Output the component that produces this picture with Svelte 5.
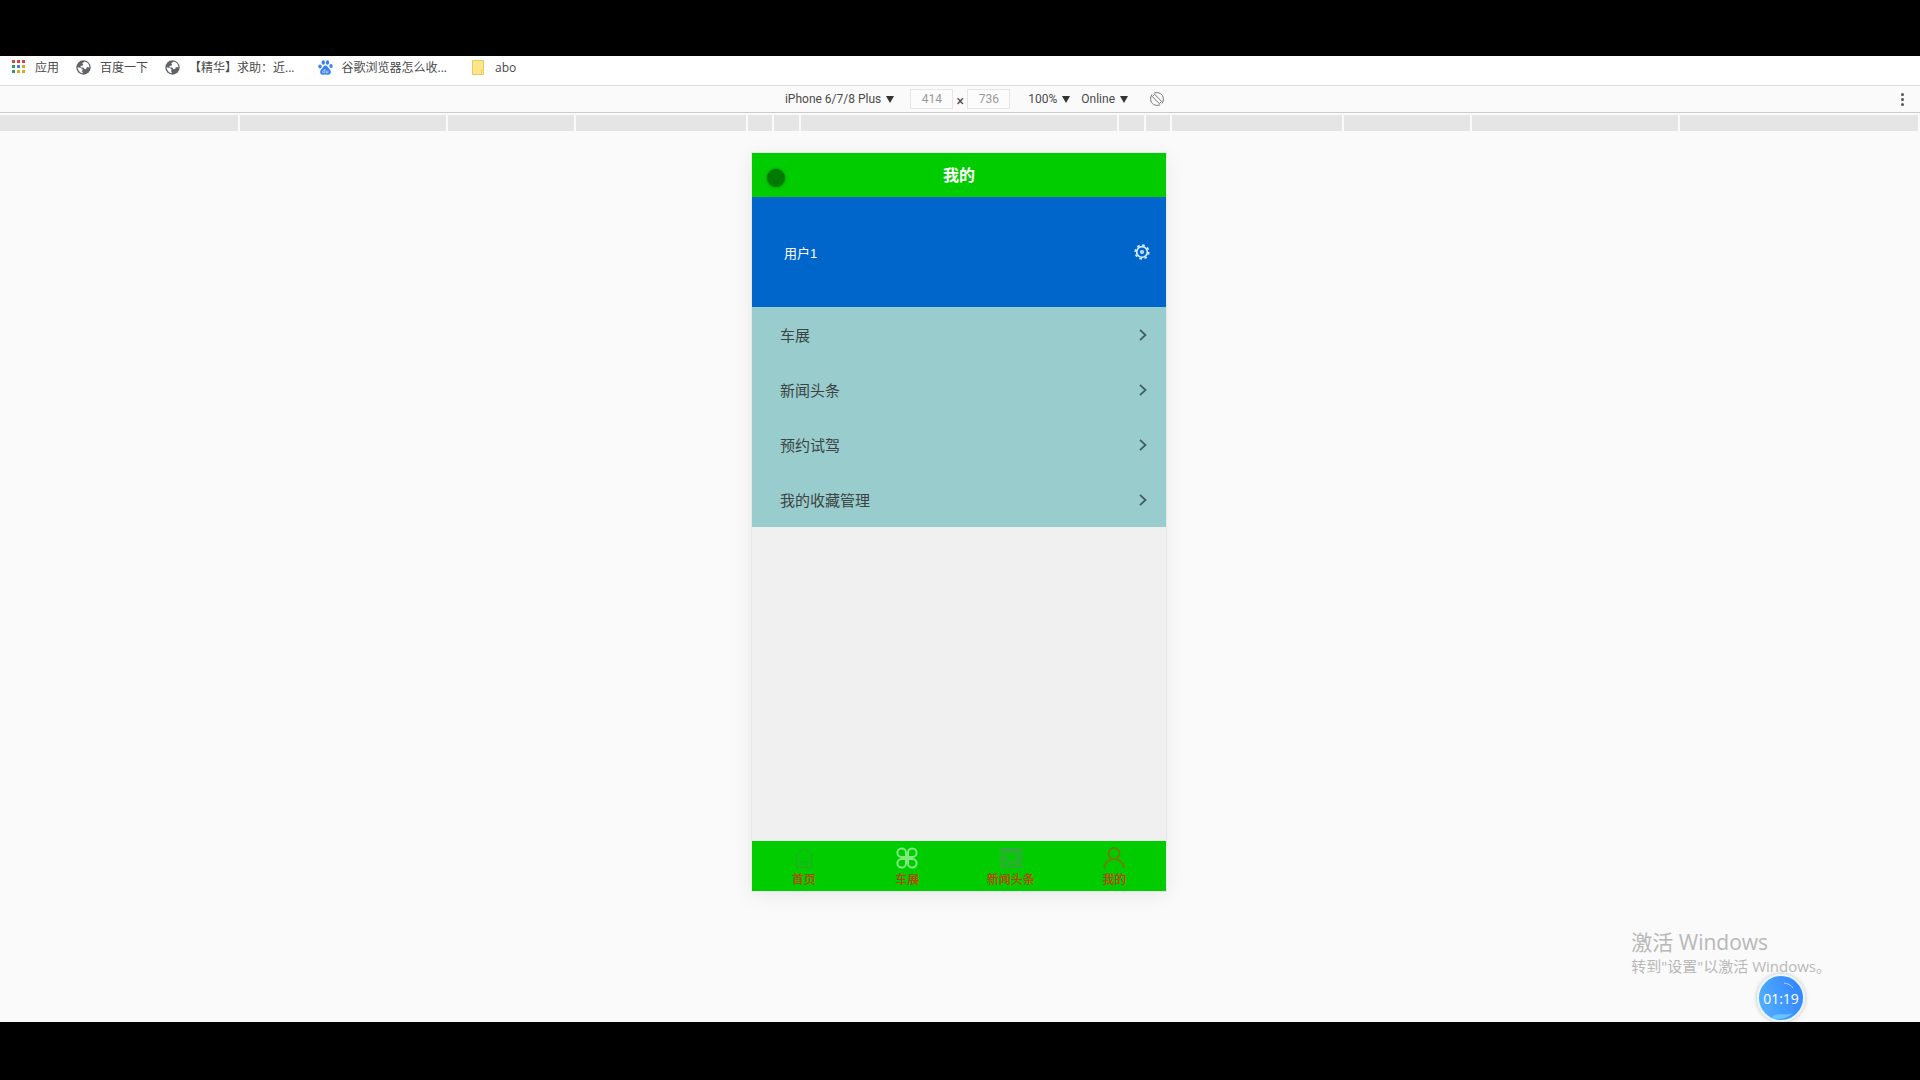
<script>
    const bookmarks = [
        { icon: "apps", label: "应用" },
        { icon: "globe", label: "百度一下" },
        { icon: "globe", label: "【精华】求助：近..." },
        { icon: "paw", label: "谷歌浏览器怎么收..." },
        { icon: "folder", label: "abo" },
    ];

    const appColors = ["#d9453d", "#d9453d", "#d9453d", "#2f9a58", "#3f7fe8", "#e0a526", "#2f9a58", "#e0a526", "#e0a526"];

    // widths between the preset device sizes, outer ones stretch
    const presets = [208, 128, 172, 26, 27, 318, 27, 26, 172, 128, 208];

    const rows = ["车展", "新闻头条", "预约试驾", "我的收藏管理"];

    const tabs = [
        { icon: "home", label: "首页" },
        { icon: "clover", label: "车展" },
        { icon: "news", label: "新闻头条" },
        { icon: "user", label: "我的" },
    ];

    let width = 414;
    let height = 736;
</script>

<div class="screen">
    <nav class="bookmarks">
        {#each bookmarks as { icon, label }}
            <a href="#top" class={icon}>
                {#if icon === "apps"}
                    <svg width="14" height="14" viewBox="0 0 14 14">
                        {#each appColors as fill, i}
                            <rect x={(i % 3) * 5} y={Math.floor(i / 3) * 5} width="3" height="3" {fill} />
                        {/each}
                    </svg>
                {:else if icon === "globe"}
                    <svg width="15" height="15" viewBox="0 0 15 15">
                        <circle cx="7.5" cy="7.5" r="7.2" fill="#5f6368" />
                        <path d="M8.500 1.600 6.200 3.400l1 1.200-.8 1.200-2 .3.400 1.300 2.400.2 1.500 1.700 1.600-.5.600-1.700 2.500.4A6 6 0 0 0 8.500 1.600ZM1.600 7.200l3.200.8 2 1.600-.8 1.300 1 2.400A6 6 0 0 1 1.600 7.200Z" fill="#fff" />
                    </svg>
                {:else if icon === "paw"}
                    <svg width="15" height="15" viewBox="0 0 15 15" fill="#3b82f0">
                        <ellipse cx="2" cy="6.5" rx="1.7" ry="2.1" />
                        <ellipse cx="5.3" cy="2.5" rx="1.7" ry="2.3" />
                        <ellipse cx="9.5" cy="2.5" rx="1.7" ry="2.3" />
                        <ellipse cx="13" cy="6" rx="1.7" ry="2.1" />
                        <path d="M7.500 5.500c2 0 2.500 2.200 4 3.600 2.300 2.200 1.500 5.700-1 5.700-1.300 0-1.700-.3-3-.3s-1.700.3-3 .3c-2.500 0-3.300-3.500-1-5.700C5 7.700 5.500 5.500 7.500 5.500Z" />
                        <path d="M6.700 9v3.700H5.400a1 1 0 0 1 0-2h1.300M8.300 10.500v2.200h1.700v-2.200" fill="none" stroke="#cfe2ff" stroke-width=".7" />
                    </svg>
                {:else}
                    <svg width="12" height="15" viewBox="0 0 12 15">
                        <path d="M.5.500h11v14H.5z" fill="#fde58a" stroke="#e8c95c" />
                        <path d="M9.500 14.500v-4h2" fill="#fff3bd" stroke="#e8c95c" />
                    </svg>
                {/if}
                <span>{label}</span>
            </a>
        {/each}
    </nav>

    <div class="toolbar">
        <div class="controls">
            <button class="drop device">iPhone 6/7/8 Plus <i></i></button>
            <input aria-label="Width" bind:value={width} />
            <span class="times">×</span>
            <input aria-label="Height" bind:value={height} />
            <button class="drop zoom">100% <i></i></button>
            <button class="drop">Online <i></i></button>
            <button class="rotate" aria-label="Rotate">
                <svg width="14" height="14" viewBox="0 0 14 14" fill="none" stroke="#777">
                    <path d="M4.600 2.300 11.700 9.400 9.400 11.700 2.300 4.600Z" />
                    <path d="M6 .7A6.300 6.300 0 0 1 13.300 8M8 13.300A6.300 6.300 0 0 1 .7 6M2 2.500A6.300 6.300 0 0 0 .7 6M12 11.500A6.300 6.300 0 0 0 13.300 8M6 .7 3.800 1.200M8 13.300l2.200-.5" />
                </svg>
            </button>
        </div>
        <button class="more" aria-label="More options"><i></i><i></i><i></i></button>
    </div>

    <div class="ruler">
        <span class="outer"></span>
        {#each presets as w}
            <span style="width: {w}px"></span>
        {/each}
        <span class="outer"></span>
    </div>

    <main>
        <div class="phone">
            <header>
                <h1>我的</h1>
                <div class="touch"></div>
            </header>

            <section class="profile">
                <span>用户1</span>
                <button aria-label="设置">
                    <svg width="16" height="16" viewBox="0 0 16 16" fill="none" stroke="#d9ecff">
                        <circle cx="8" cy="8" r="5.3" stroke-width="1.7" />
                        <circle cx="8" cy="8" r="6.8" stroke-width="1.7" stroke-dasharray="2.7 2.64" />
                        <circle cx="8" cy="8" r="1.3" stroke-width="1.4" />
                    </svg>
                </button>
            </section>

            <ul>
                {#each rows as row}
                    <li>
                        <a href="#top">
                            {row}
                            <svg width="8" height="12" viewBox="0 0 8 12" fill="none" stroke="#3f5f60" stroke-width="1.8">
                                <path d="m1 .8 5.500 5.200L1 11.200" />
                            </svg>
                        </a>
                    </li>
                {/each}
            </ul>

            <nav class="tabs">
                {#each tabs as { icon, label }}
                    <a href="#top">
                        <svg class={icon} width="22" height="22" viewBox="0 0 22 22" fill="none">
                            {#if icon === "home"}
                                <path d="M1.500 9.500 11 1.500l9.500 8M3.500 8.500v12h15v-12M8.500 20v-5h5v5" />
                            {:else if icon === "clover"}
                                <path d="M10 10H5.500A4.300 4.300 0 1 1 10 5.500ZM12 10V5.500A4.300 4.300 0 1 1 16.500 10ZM10 12v4.500A4.300 4.300 0 1 1 5.500 12ZM12 12h4.500a4.300 4.300 0 1 1-4.500 4.500Z" />
                            {:else if icon === "news"}
                                <path d="M1.500 2.500h19v17h-19zM4 5h14M5 8.500v3l3 3.500h9v-6.500" />
                            {:else}
                                <circle cx="11" cy="6.5" r="5.5" />
                                <path d="M1 21c.8-5.500 5-9 10-9s9.200 3.500 10 9" />
                            {/if}
                        </svg>
                        <span>{label}</span>
                    </a>
                {/each}
            </nav>
        </div>

        <aside>
            <p class="activate">激活 Windows</p>
            <p>转到"设置"以激活 Windows。</p>
        </aside>
        <div class="timer">
            <svg width="44" height="44" viewBox="0 0 44 44" fill="none">
                <path d="M12 42c6-7 13-1 22-5a22 22 0 0 1-22 5Z" fill="#6cc4ff" />
                <path d="M25 7c4 .500 7 2 9 5" stroke="#a9d4ff" />
            </svg>
            <span>01:19</span>
        </div>
    </main>
</div>

<style>
    :global(body) {
        margin: 0;
        background: #000;
    }

    .screen {
        box-sizing: border-box;
        min-height: 100vh;
        display: flex;
        flex-direction: column;
        border-top: 56px solid #000;
        border-bottom: 58px solid #000;
        background: #fafafa;
        font-family: "Open Sans", "Noto Sans CJK SC", sans-serif;
        font-size: 12px;
        color: #4a4a4a;
    }

    a {
        color: inherit;
        text-decoration: none;
    }

    button {
        padding: 0;
        border: 0;
        background: none;
        font: inherit;
        color: inherit;
    }

    svg {
        display: block;
        flex: none;
    }

    .bookmarks {
        display: flex;
        height: 29px;
        padding: 0 12px 7px;
        box-sizing: border-box;
        gap: 17px;
        background: #fff;
    }

    .bookmarks a {
        display: flex;
        align-items: center;
        gap: 9px;
    }

    .bookmarks .paw {
        margin-left: 6px;
    }

    .bookmarks .folder {
        gap: 11px;
        margin-left: 8px;
    }

    .toolbar {
        display: flex;
        align-items: center;
        height: 28px;
        border-top: 1px solid #dadada;
        border-bottom: 1px solid #ccc;
        box-sizing: border-box;
        font-family: Roboto, sans-serif;
    }

    .controls {
        flex: 1;
        display: flex;
        align-items: center;
        justify-content: center;
        padding-left: 48px;
    }

    .drop {
        display: flex;
        align-items: center;
        gap: 5px;
        margin-right: 11px;
    }

    .drop i {
        border: 4px solid transparent;
        border-top: 7px solid #333;
        border-bottom: 0;
    }

    .device {
        margin-right: 16px;
    }

    .zoom {
        margin-left: 18px;
    }

    input {
        width: 43px;
        height: 20px;
        box-sizing: border-box;
        padding: 0;
        border: 1px solid #e6e6e6;
        background: #fcfcfc;
        font: inherit;
        text-align: center;
        color: #999;
    }

    .times {
        width: 14px;
        padding-top: 3px;
        font-size: 14px;
        line-height: 16px;
        text-align: center;
    }

    .rotate {
        margin-left: 11px;
    }

    .more {
        display: grid;
        gap: 2px;
        margin-right: 16px;
    }

    .more i {
        width: 3px;
        height: 3px;
        border-radius: 50%;
        background: #555;
    }

    .ruler {
        display: flex;
        height: 16px;
        margin-top: 2px;
        background: #e5e5e5;
    }

    .ruler span {
        box-sizing: border-box;
        border-right: 2px solid #fafafa;
    }

    .ruler .outer {
        flex: 1;
    }

    main {
        position: relative;
        flex: 1;
        display: flex;
        justify-content: center;
        padding: 22px 2px 131px 0;
    }

    .phone {
        display: flex;
        flex-direction: column;
        width: 414px;
        background: #f0f0f0;
        box-shadow: 0 0 0 1px #e4e8ea, 0 4px 20px rgba(0, 0, 0, 0.08);
    }

    header {
        position: relative;
        height: 44px;
        background: #0c0;
    }

    h1 {
        margin: 0;
        font-size: 16px;
        line-height: 44px;
        text-align: center;
        color: #fff;
    }

    .touch {
        position: absolute;
        left: 15px;
        top: 16px;
        width: 18px;
        height: 18px;
        border-radius: 50%;
        background: #007a00;
        box-shadow: 0 0 3px #007a00;
    }

    .profile {
        display: flex;
        align-items: center;
        justify-content: space-between;
        height: 110px;
        padding: 0 16px 0 32px;
        box-sizing: border-box;
        background: #06c;
        font-family: "Liberation Sans", "Noto Sans CJK SC", sans-serif;
        font-size: 13px;
        color: #fff;
    }

    ul {
        margin: 0;
        padding: 0;
        list-style: none;
        background: #9cc;
    }

    li a {
        display: flex;
        align-items: center;
        justify-content: space-between;
        height: 55px;
        padding: 0 19px 0 28px;
        font-size: 15px;
        color: #3a4444;
    }

    .tabs {
        display: flex;
        height: 50px;
        margin-top: auto;
        background: #0c0;
    }

    .tabs a {
        flex: 1;
        display: flex;
        flex-direction: column;
        align-items: center;
        gap: 2px;
        padding-top: 6px;
        font-size: 12px;
        font-weight: 500;
        line-height: 18px;
        color: #c43c00;
    }

    .home {
        stroke: #2ba52b;
    }

    .clover {
        stroke: #7fe87f;
        stroke-width: 2px;
    }

    .news {
        stroke: #3fa04a;
        stroke-width: 2px;
    }

    .user {
        stroke: #6b8000;
        stroke-width: 2px;
    }

    aside {
        position: absolute;
        right: 89px;
        bottom: 44px;
        color: #b8b8b8;
    }

    p {
        margin: 0;
        font-size: 15px;
        line-height: 24px;
    }

    .activate {
        font-size: 21px;
    }

    .timer {
        position: absolute;
        right: 115px;
        bottom: 0;
        display: grid;
        place-items: center;
        width: 44px;
        height: 44px;
        border: 2px solid #e8f6ff;
        border-radius: 50%;
        background: linear-gradient(70deg, #55b4ff, #2f80ff);
        box-shadow: 0 0 4px rgba(0, 0, 0, 0.25);
        font-size: 14px;
        color: #fff;
    }

    .timer svg,
    .timer span {
        grid-area: 1 / 1;
    }
</style>
